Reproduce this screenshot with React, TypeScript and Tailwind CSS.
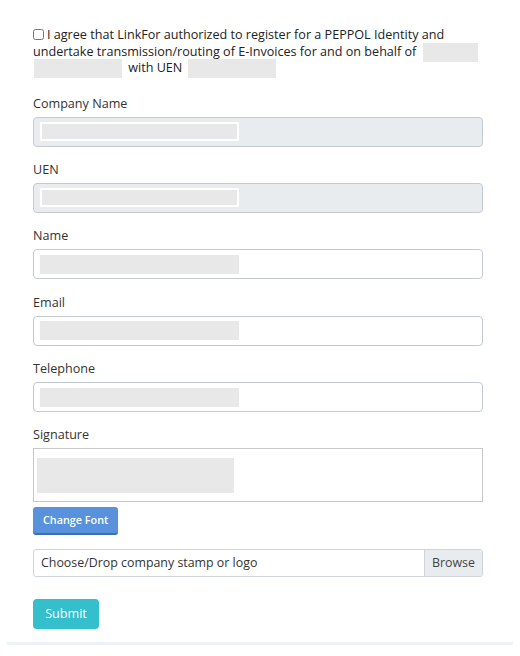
import React from 'react';

const Blank = ({ className }: { className: string }) => (
  <span className={`inline-block bg-[#e8e8e8] align-middle my-[-2px] ${className}`} />
);

const Field = ({ label, readOnly }: { label: string; readOnly?: boolean }) => (
  <div className="mb-[14.4px]">
    <label className="block text-[12.6px] leading-[17px] text-[#333] mb-[5px]">{label}</label>
    <div
      className={`h-[30px] rounded-[4px] border flex items-center px-[6px] ${
        readOnly ? 'bg-[#e9ecef] border-[#c5cad2]' : 'bg-white border-[#c3c9d2]'
      }`}
    >
      <span
        className={`block w-[199px] h-[19px] bg-[#e8e8e8] ${readOnly ? 'border-2 border-white' : 'border-2 border-[#e8e8e8]'}`}
      />
    </div>
  </div>
);

export default function App() {
  return (
    <div className="w-[520px] h-[656px] bg-white overflow-hidden" style={{ fontFamily: '"Open Sans", "Liberation Sans", sans-serif' }}>
      <div className="ml-[33px] w-[450px] pt-[27px]">
        <p className="text-[12.6px] leading-[16.5px] text-[#222] mb-[18px]">
          <input type="checkbox" className="w-[11px] h-[11px] mr-[3px] align-[-1px]" />
          I agree that LinkFor authorized to register for a PEPPOL Identity and undertake transmission/routing of
          E-Invoices for and on behalf of <Blank className="w-[55px] h-[19px] ml-[3px]" />
          <br />
          <Blank className="w-[88px] h-[19px] ml-[1px] mr-[3px]" /> with UEN <Blank className="w-[88px] h-[19px] ml-[2px]" />
        </p>

        <Field label="Company Name" readOnly />
        <Field label="UEN" readOnly />
        <Field label="Name" />
        <Field label="Email" />
        <Field label="Telephone" />

        <div>
          <label className="block text-[12.6px] leading-[17px] text-[#333] mb-[5px]">Signature</label>
          <div className="h-[54px] border border-[#c8c8c8] bg-white pl-[3px] pt-[9px]">
            <span className="block w-[197px] h-[35px] bg-[#e8e8e8]" />
          </div>
          <button className="mt-[5px] h-[28px] px-[10px] rounded-[3px] bg-[#5892dc] border-b-2 border-[#3f6fae] text-white text-[10.8px] font-semibold">
            Change Font
          </button>
        </div>

        <div className="mt-[14px] h-[28px] flex border border-[#ced4da] rounded-[3px] overflow-hidden text-[12.4px] text-[#333]">
          <div className="flex-1 flex items-center px-[7px]">Choose/Drop company stamp or logo</div>
          <div className="w-[58px] flex items-center justify-center bg-[#e9ecef] border-l border-[#ced4da] text-[#444]">Browse</div>
        </div>

        <button className="block mt-[22px] h-[30px] w-[66px] rounded-[4px] bg-[#33bfcb] text-white text-[12.6px]">Submit</button>
      </div>
      <div className="mx-[7px] mt-[13px] h-[3px] bg-[#edf1f8]" />
    </div>
  );
}
